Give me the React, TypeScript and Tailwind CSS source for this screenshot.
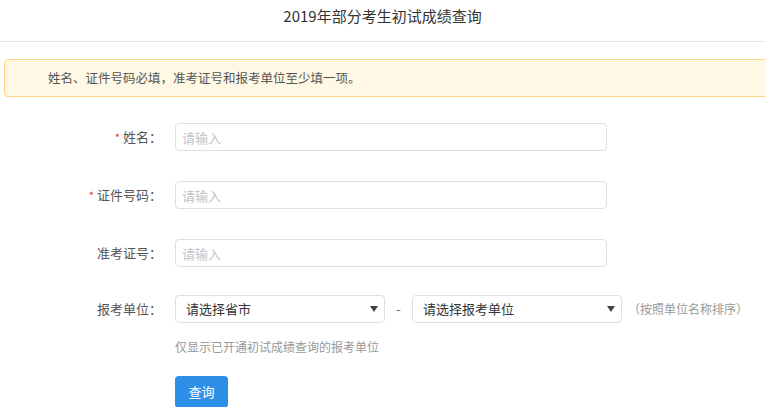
const font = { fontFamily: '"Noto Sans CJK SC", "Noto Sans", sans-serif' };

function Label({ text, required }: { text: string; required?: boolean }) {
  return (
    <div className="flex w-[162px] shrink-0 items-center justify-end text-[13px] text-[#555]">
      {required && <span className="mr-[3px] text-[11px] text-[#f0302e]">*</span>}
      <span>{text}：</span>
    </div>
  );
}

function TextInput() {
  return (
    <input
      placeholder="请输入"
      className="ml-[13px] h-[28px] w-[432px] rounded-[4px] border border-[#dcdfe6] bg-white px-[6px] text-[13px] text-[#333] outline-none placeholder:text-[#c0c4cc]"
    />
  );
}

function Select({ text }: { text: string }) {
  return (
    <div className="flex h-[28px] w-[210px] items-center justify-between rounded-[4px] border border-[#dcdfe6] bg-white pl-[10px] pr-[6px] text-[13px] text-[#333]">
      <span>{text}</span>
      <svg width="8" height="6" viewBox="0 0 8 6">
        <path d="M0 0h8L4 6z" fill="#444" />
      </svg>
    </div>
  );
}

export default function App() {
  return (
    <div className="h-[407px] w-[765px] overflow-hidden bg-white" style={font}>
      <header className="flex h-[42px] items-center justify-center border-b border-[#e5e5e5] pb-[9px] text-[15px] text-[#333]">
        2019年部分考生初试成绩查询
      </header>

      <div className="ml-[4px] mr-[-20px] mt-[17px] flex h-[38px] items-center rounded-[4px] border border-[#fdd77c] bg-[#fff8e4] pl-[43px] text-[12.5px] text-[#555]">
        姓名、证件号码必填，准考证号和报考单位至少填一项。
      </div>

      <div className="mt-[26px] flex flex-col">
        <div className="flex items-center">
          <Label text="姓名" required />
          <TextInput />
        </div>
        <div className="mt-[30px] flex items-center">
          <Label text="证件号码" required />
          <TextInput />
        </div>
        <div className="mt-[30px] flex items-center">
          <Label text="准考证号" />
          <TextInput />
        </div>
        <div className="mt-[28px] flex items-center">
          <Label text="报考单位" />
          <div className="ml-[13px] flex items-center">
            <Select text="请选择省市" />
            <span className="w-[27px] text-center text-[13px] text-[#666]">-</span>
            <Select text="请选择报考单位" />
            <span className="ml-[6px] text-[12px] text-[#999]">（按照单位名称排序）</span>
          </div>
        </div>
        <div className="ml-[175px] mt-[15px] text-[12px] leading-[17px] text-[#999]">
          仅显示已开通初试成绩查询的报考单位
        </div>
        <div className="ml-[175px] mt-[21px]">
          <button className="h-[32px] w-[53px] rounded-[4px] bg-[#2d8fe8] text-[13px] text-white">
            查询
          </button>
        </div>
      </div>
    </div>
  );
}
